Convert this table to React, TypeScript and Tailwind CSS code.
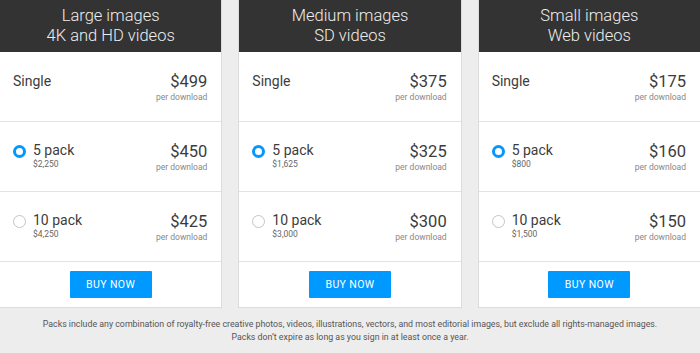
import React from 'react';

type Row = { label: string; sub?: string; price: string; radio?: 'on' | 'off' };

const cards: { title: string; subtitle: string; rows: Row[] }[] = [
  {
    title: 'Large images',
    subtitle: '4K and HD videos',
    rows: [
      { label: 'Single', price: '$499' },
      { label: '5 pack', sub: '$2,250', price: '$450', radio: 'on' },
      { label: '10 pack', sub: '$4,250', price: '$425', radio: 'off' },
    ],
  },
  {
    title: 'Medium images',
    subtitle: 'SD videos',
    rows: [
      { label: 'Single', price: '$375' },
      { label: '5 pack', sub: '$1,625', price: '$325', radio: 'on' },
      { label: '10 pack', sub: '$3,000', price: '$300', radio: 'off' },
    ],
  },
  {
    title: 'Small images',
    subtitle: 'Web videos',
    rows: [
      { label: 'Single', price: '$175' },
      { label: '5 pack', sub: '$800', price: '$160', radio: 'on' },
      { label: '10 pack', sub: '$1,500', price: '$150', radio: 'off' },
    ],
  },
];

function Radio({ on }: { on: boolean }) {
  return on ? (
    <span className="w-[13px] h-[13px] rounded-full border-[3.5px] border-[#0099ff] bg-white shrink-0" />
  ) : (
    <span className="w-[13px] h-[13px] rounded-full border border-[#c4c4c4] bg-white shrink-0" />
  );
}

function PriceRow({ row }: { row: Row }) {
  return (
    <div className="h-[70px] flex items-center justify-between pl-[13px] pr-[14px] border-b border-[#e3e3e3]">
      {row.radio ? (
        <div className="flex items-start gap-[7px]">
          <Radio on={row.radio === 'on'} />
          <div className="flex flex-col mt-[-3px]">
            <span className="text-[14px] leading-[17px] text-[#3c3c3c]">{row.label}</span>
            <span className="text-[8.5px] leading-[10px] text-[#666]">{row.sub}</span>
          </div>
        </div>
      ) : (
        <div className="self-start pt-[17px]">
          <span className="text-[14px] leading-[17px] text-[#3c3c3c]">{row.label}</span>
        </div>
      )}
      <div className="flex flex-col items-end">
        <span className="text-[16.5px] leading-[20px] text-[#3c3c3c]">{row.price}</span>
        <span className="text-[8.5px] leading-[10px] text-[#888]">per download</span>
      </div>
    </div>
  );
}

export default function App() {
  return (
    <div className="w-[700px] h-[353px] bg-[#ededed] font-['Roboto',sans-serif] overflow-hidden">
      <div className="flex gap-[16px] ml-[-1px] mr-[-1px]">
        {cards.map((c, i) => (
          <div key={i} className="flex-1 bg-white border border-t-0 border-[#dcdcdc] flex flex-col">
            <div className="h-[52px] bg-[#333333] text-[#eeeeee] text-[16.5px] font-light leading-[20px] flex flex-col items-center justify-center">
              <span>{c.title}</span>
              <span>{c.subtitle}</span>
            </div>
            {c.rows.map((r, j) => (
              <PriceRow key={j} row={r} />
            ))}
            <div className="h-[45px] flex items-center justify-center">
              <button className="w-[82px] h-[27px] bg-[#0099ff] text-white text-[10.5px] tracking-[0.4px] rounded-[1px]">
                BUY NOW
              </button>
            </div>
          </div>
        ))}
      </div>
      <div className="mt-[10px] text-center text-[8.8px] leading-[13px] text-[#555]">
        <p>Packs include any combination of royalty-free creative photos, videos, illustrations, vectors, and most editorial images, but exclude all rights-managed images.</p>
        <p>Packs don&rsquo;t expire as long as you sign in at least once a year.</p>
      </div>
    </div>
  );
}
